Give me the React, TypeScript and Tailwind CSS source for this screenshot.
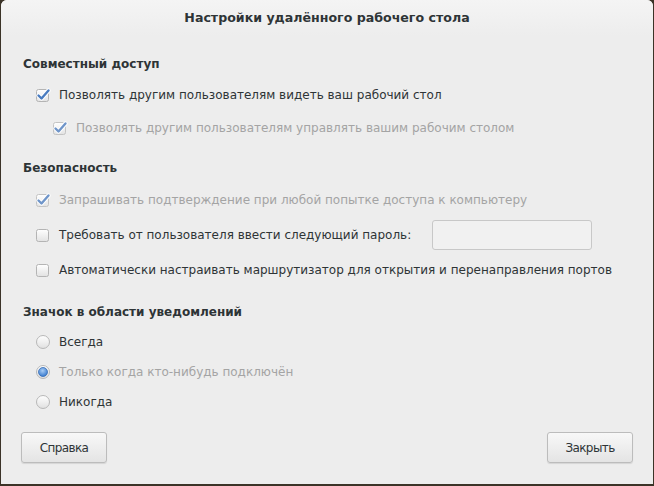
import React from 'react';

const font = { fontFamily: '"DejaVu Sans", "Liberation Sans", sans-serif' };

const CheckBox = ({ checked, dim }: { checked?: boolean; dim?: boolean }) => (
  <svg width="16" height="16" viewBox="0 0 16 16" className="shrink-0">
    <defs>
      <linearGradient id="cbg" x1="0" y1="0" x2="0" y2="1">
        <stop offset="0" stopColor="#ffffff" />
        <stop offset="1" stopColor="#e2e2e2" />
      </linearGradient>
    </defs>
    <rect x="1.5" y="2.5" width="12" height="12" rx="2" fill="url(#cbg)" stroke={dim ? '#c4c4c4' : '#b4b4b4'} />
    {checked && (
      <>
        <path d="M3.5 8.5 L6.5 11.5 L13.5 3.5" fill="none" stroke="#ffffff" strokeWidth="4.2" strokeLinecap="round" strokeLinejoin="round" />
        <path d="M3.5 8.5 L6.5 11.5 L13.5 3.5" fill="none" stroke={dim ? '#6f95c9' : '#4a7cc0'} strokeWidth="2.4" strokeLinecap="round" strokeLinejoin="round" />
      </>
    )}
  </svg>
);

const Radio = ({ checked }: { checked?: boolean }) => (
  <svg width="16" height="16" viewBox="0 0 16 16" className="shrink-0">
    <defs>
      <linearGradient id="rbg" x1="0" y1="0" x2="0" y2="1">
        <stop offset="0" stopColor="#ffffff" />
        <stop offset="1" stopColor="#e0e0e0" />
      </linearGradient>
      <radialGradient id="rsel" cx="0.45" cy="0.35" r="0.6">
        <stop offset="0" stopColor="#a9cdf5" />
        <stop offset="1" stopColor="#3f7fd0" />
      </radialGradient>
    </defs>
    <circle cx="8" cy="8" r="6.5" fill="url(#rbg)" stroke="#b8b8b8" />
    {checked && <circle cx="8" cy="8" r="4.5" fill="url(#rsel)" stroke="#3a6fb5" strokeWidth="0.8" />}
  </svg>
);

const Row = ({ children, dim, indent, h }: { children: React.ReactNode; dim?: boolean; indent?: boolean; h: string }) => (
  <div className={`flex items-center gap-[8px] ${h} ${indent ? 'pl-[51px]' : 'pl-[34px]'} ${dim ? 'text-[#a4a4a4]' : 'text-[#2e3436]'}`}>
    {children}
  </div>
);

const Header = ({ children }: { children: React.ReactNode }) => (
  <div className="pl-[22px] h-[28px] flex items-center font-bold text-[#2e3436]">{children}</div>
);

const btn =
  'w-[86px] h-[31px] rounded-[3px] border border-[#bcbcbc] bg-gradient-to-b from-[#f8f8f8] to-[#e4e4e4] text-[#2e3436] text-[12px] tracking-[-0.6px] shadow-[0_1px_1px_rgba(0,0,0,0.1)]';

export default function App() {
  return (
    <div className="w-[654px] h-[486px] bg-[#3b3327] overflow-hidden" style={font}>
      <div className="mx-px h-[484px] rounded-t-[6px] bg-[#ededed] flex flex-col text-[12px]">
        <div className="h-[36px] rounded-t-[6px] bg-gradient-to-b from-[#f4f4f4] to-[#ededed] flex items-center justify-center font-bold text-[#2e3436] text-[12.6px]">
          Настройки удалённого рабочего стола
        </div>

        <div className="flex flex-col pt-[14px]">
          <Header>Совместный доступ</Header>
          <Row h="h-[33px]">
            <CheckBox checked />
            <span>Позволять другим пользователям видеть ваш рабочий стол</span>
          </Row>
          <Row h="h-[33px]" dim indent>
            <CheckBox checked dim />
            <span>Позволять другим пользователям управлять вашим рабочим столом</span>
          </Row>

          <div className="mt-[10px]">
            <Header>Безопасность</Header>
          </div>
          <Row h="h-[35px]" dim>
            <CheckBox checked dim />
            <span>Запрашивать подтверждение при любой попытке доступа к компьютеру</span>
          </Row>
          <Row h="h-[35px]">
            <CheckBox />
            <span>Требовать от пользователя ввести следующий пароль:</span>
            <div className="ml-[13px] w-[160px] h-[30px] rounded-[3px] border border-[#c8c8c8] bg-[#f1f1f1]" />
          </Row>
          <Row h="h-[35px]">
            <CheckBox />
            <span>Автоматически настраивать маршрутизатор для открытия и перенаправления портов</span>
          </Row>

          <div className="mt-[11px]">
            <Header>Значок в области уведомлений</Header>
          </div>
          <div className="mt-px">
            <Row h="h-[30px]">
              <Radio />
              <span>Всегда</span>
            </Row>
            <Row h="h-[30px]" dim>
              <Radio checked />
              <span>Только когда кто-нибудь подключён</span>
            </Row>
            <Row h="h-[30px]">
              <Radio />
              <span>Никогда</span>
            </Row>
          </div>
        </div>

        <div className="mt-auto flex justify-between px-[20px] pb-[21px]">
          <button className={btn}>Справка</button>
          <button className={btn}>Закрыть</button>
        </div>
      </div>
    </div>
  );
}
